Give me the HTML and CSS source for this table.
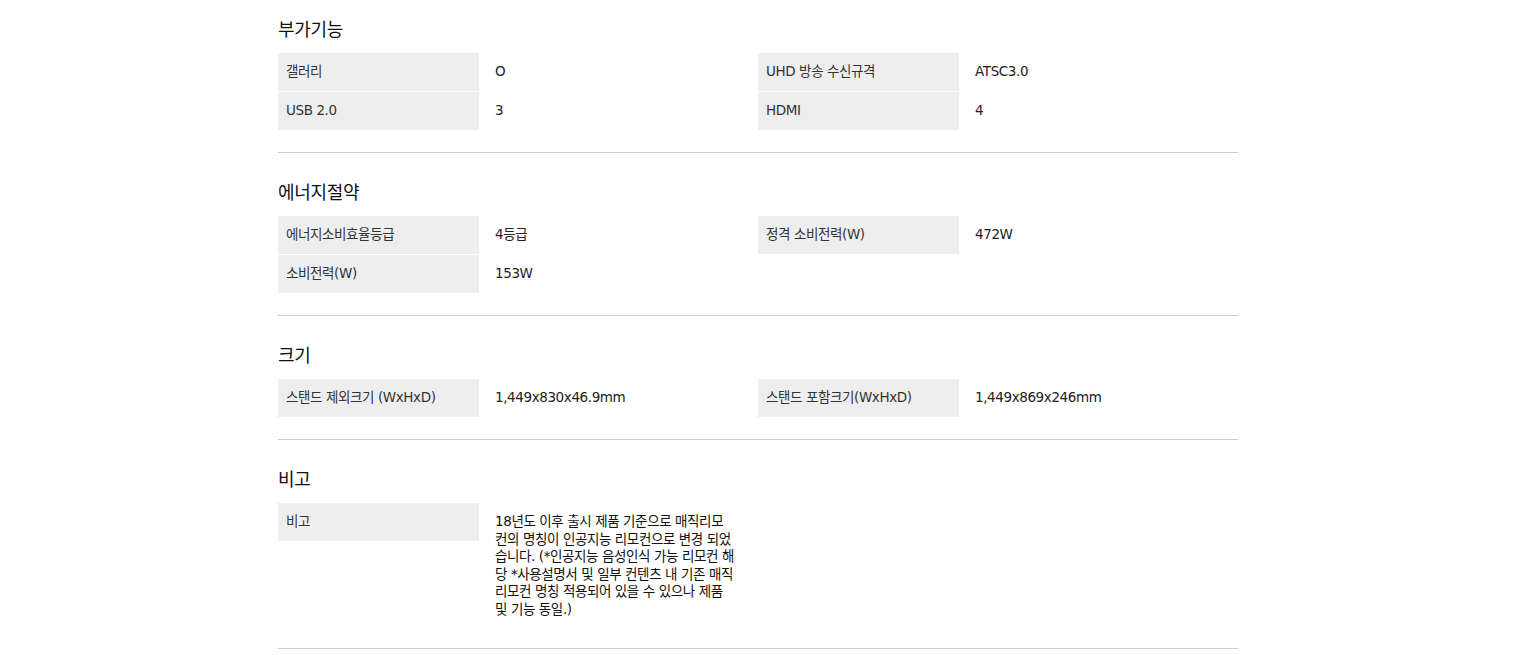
FILE: index.html
```html
<!DOCTYPE html>
<html lang="ko">
<head>
<meta charset="utf-8">
<title>제품 사양</title>
<link rel="stylesheet" href="styles.css">
</head>
<body>
<div class="spec">
  <section class="spec-section">
    <h3 class="spec-title">부가기능</h3>
    <div class="spec-grid">
      <div class="spec-item"><div class="spec-label">갤러리</div><div class="spec-value">O</div></div>
      <div class="spec-item"><div class="spec-label">UHD 방송 수신규격</div><div class="spec-value">ATSC3.0</div></div>
      <div class="spec-item"><div class="spec-label">USB 2.0</div><div class="spec-value">3</div></div>
      <div class="spec-item"><div class="spec-label">HDMI</div><div class="spec-value">4</div></div>
    </div>
  </section>
  <section class="spec-section">
    <h3 class="spec-title">에너지절약</h3>
    <div class="spec-grid">
      <div class="spec-item"><div class="spec-label">에너지소비효율등급</div><div class="spec-value">4등급</div></div>
      <div class="spec-item"><div class="spec-label">정격 소비전력(W)</div><div class="spec-value">472W</div></div>
      <div class="spec-item"><div class="spec-label">소비전력(W)</div><div class="spec-value">153W</div></div>
    </div>
  </section>
  <section class="spec-section">
    <h3 class="spec-title">크기</h3>
    <div class="spec-grid">
      <div class="spec-item"><div class="spec-label">스탠드 제외크기 (WxHxD)</div><div class="spec-value">1,449x830x46.9mm</div></div>
      <div class="spec-item"><div class="spec-label">스탠드 포함크기(WxHxD)</div><div class="spec-value">1,449x869x246mm</div></div>
    </div>
  </section>
  <section class="spec-section">
    <h3 class="spec-title">비고</h3>
    <div class="spec-grid">
      <div class="spec-item"><div class="spec-label">비고</div><div class="spec-value spec-note">18년도 이후 출시 제품 기준으로 매직리모<br>컨의 명칭이 인공지능 리모컨으로 변경 되었<br>습니다. (*인공지능 음성인식 가능 리모컨 해<br>당 *사용설명서 및 일부 컨텐츠 내 기존 매직<br>리모컨 명칭 적용되어 있을 수 있으나 제품<br>및 기능 동일.)</div></div>
    </div>
  </section>
</div>
</body>
</html>
```
FILE: styles.css
```css
html, body {
  margin: 0;
  padding: 0;
  background: #fff;
}
body {
  font-family: "DejaVu Sans", "Noto Sans CJK KR", sans-serif;
  font-size: 13.5px;
  color: #222;
}
.spec {
  width: 960px;
  margin: 0 auto;
}
.spec-section {
  padding: 26px 0 22px;
  border-bottom: 1px solid #cccccc;
}
.spec-section:first-child {
  padding-top: 16px;
}
.spec-title {
  margin: 0 0 13px;
  font-family: "Noto Sans CJK KR", sans-serif;
  font-size: 18px;
  line-height: 24px;
  font-weight: 400;
  color: #111;
  letter-spacing: -0.3px;
}
.spec-grid {
  display: grid;
  grid-template-columns: 1fr 1fr;
  row-gap: 1px;
}
.spec-item {
  display: flex;
  align-items: flex-start;
}
.spec-label {
  flex: 0 0 201px;
  box-sizing: border-box;
  padding: 10px 8px 10.5px;
  line-height: 17.5px;
  background: #eeeeee;
  color: #333;
  letter-spacing: -0.4px;
}
.spec-value {
  flex: 1;
  padding: 10px 12px 10.5px 16px;
  line-height: 17.5px;
  color: #222;
  letter-spacing: -0.4px;
}
.spec-note {
  padding-bottom: 8px;
  color: #111;
  white-space: nowrap;
}
```
